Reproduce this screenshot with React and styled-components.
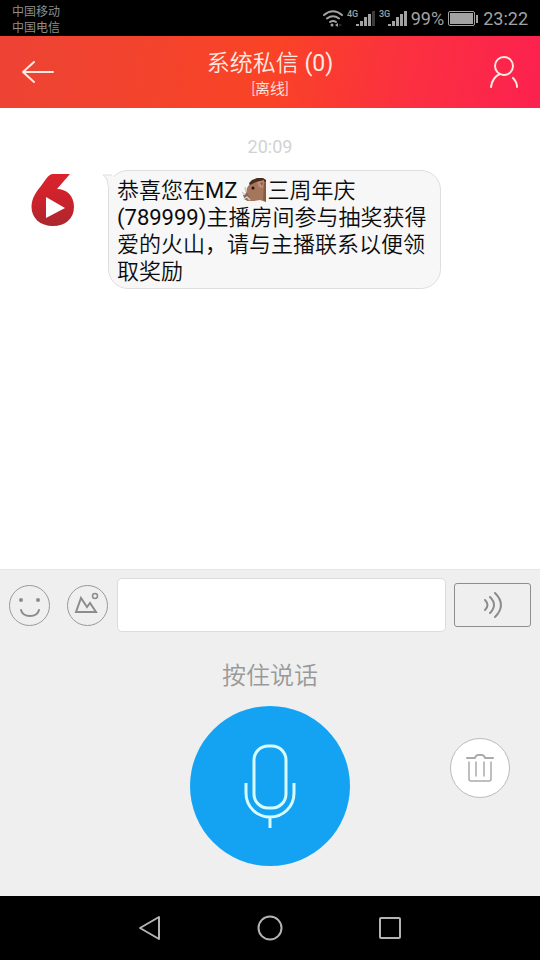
import React, { useState } from 'react';
import styled, { createGlobalStyle } from 'styled-components';

const GlobalStyle = createGlobalStyle`
  * {
    box-sizing: border-box;
  }

  body {
    margin: 0;
    background: #fff;
    font-family: Roboto, "Noto Sans CJK SC", sans-serif;
  }

  button {
    padding: 0;
    border: 0;
    background: none;
    font: inherit;
    cursor: pointer;
  }

  svg {
    display: block;
  }
`;

const Screen = styled.div`
  display: flex;
  flex-direction: column;
  min-height: 100vh;
`;

const StatusBar = styled.div`
  display: flex;
  align-items: center;
  justify-content: space-between;
  height: 36px;
  padding: 0 12px;
  background: #000;
  color: #a2a2a2;
`;

const Carriers = styled.div`
  padding-top: 4px;
  color: #8e8e8e;
  font-size: 12px;
  line-height: 16px;
`;

const Indicators = styled.div`
  display: flex;
  align-items: center;
  gap: 4px;
  padding-top: 2px;
  font-size: 18px;
  line-height: 24px;
`;

const Header = styled.header`
  display: grid;
  grid-template-columns: 1fr auto 1fr;
  align-items: center;
  height: 72px;
  padding: 0 20px;
  background: linear-gradient(100deg, #ee4334 5%, #f94326 50%, #fb3040 75%, #fc224e 98%);
  color: #ffe9e0;
`;

const HeaderButton = styled.button`
  justify-self: ${({ $end }) => ($end ? 'end' : 'start')};
  color: inherit;
`;

const Heading = styled.div`
  padding-top: 4px;
  text-align: center;
`;

const Title = styled.h1`
  margin: 0;
  font-size: 23px;
  font-weight: 350;
  line-height: 30px;
`;

const Latin = styled.span`
  font-weight: 400;
`;

const Presence = styled.div`
  font-size: 15px;
  font-weight: 350;
  line-height: 20px;
`;

const Chat = styled.main`
  flex: 1;
  padding: 26px 0;
`;

const Time = styled.div`
  color: #d2d2d2;
  font-size: 18px;
  line-height: 26px;
  text-align: center;
`;

const Message = styled.div`
  display: flex;
  align-items: flex-start;
  padding: 10px 99px 0 29px;
`;

const Avatar = styled.svg`
  flex: none;
  margin: 2px 29px 0 0;
`;

const Bubble = styled.div`
  position: relative;
  flex: 1;
  padding: 6px 8px 3px;
  border: 1px solid #dedede;
  border-radius: 20px;
  background: #f7f7f7;
  color: #0c0c0c;
  font-size: 22px;
  font-weight: 350;
  line-height: 27px;
`;

const Tail = styled.svg`
  position: absolute;
  top: 3px;
  left: -7px;
`;

const Emoji = styled.svg`
  display: inline-block;
  margin: 0 1px 0 5px;
  vertical-align: -4px;
`;

const Panel = styled.footer`
  padding: 8px 9px 30px;
  border-top: 1px solid #e6e6e6;
  background: #efefef;
`;

const Toolbar = styled.div`
  display: flex;
  align-items: center;
`;

const RoundButton = styled.button`
  display: grid;
  place-items: center;
  flex: none;
  width: ${({ $size }) => $size}px;
  height: ${({ $size }) => $size}px;
  border: 1px solid ${({ $border }) => $border || '#999'};
  border-radius: 50%;
  background: ${({ $fill }) => $fill || 'none'};
  color: #8c8c8c;
`;

const Tools = styled.div`
  display: flex;
  gap: 17px;
`;

const TextBox = styled.input`
  flex: 1;
  min-width: 0;
  height: 54px;
  margin: 0 8px 0 9px;
  padding: 0 10px;
  border: 1px solid #dcdcdc;
  border-radius: 5px;
  background: #fff;
  font: inherit;
  font-size: 22px;
`;

const VoiceButton = styled.button`
  display: grid;
  place-items: center;
  flex: none;
  width: 77px;
  height: 44px;
  border: 1px solid #8e8e8e;
  border-radius: 3px;
  color: #8c8c8c;
`;

const Hint = styled.div`
  margin: 26px 0 12px;
  color: #999;
  font-size: 24px;
  font-weight: 350;
  line-height: 36px;
  text-align: center;
`;

const Recorder = styled.div`
  display: grid;
  grid-template-columns: 1fr auto 1fr;
`;

const RecordButton = styled.button`
  display: grid;
  grid-column: 2;
  place-items: center;
  width: 160px;
  height: 160px;
  border-radius: 50%;
  background: #14a3f3;
  color: #d8fbff;
`;

const Discard = styled.div`
  justify-self: end;
  padding: 32px 21px 0 0;
`;

const NavBar = styled.nav`
  display: flex;
  align-items: center;
  justify-content: center;
  gap: 92px;
  height: 64px;
  background: #000;
`;

const NavButton = styled.button`
  color: #b4b4b4;
`;

const Icon = ({ w, h, stroke = 2, children }) => (
  <svg
    width={ w }
    height={ h }
    viewBox={ `0 0 ${w} ${h}` }
    fill="none"
    stroke="currentColor"
    strokeWidth={ stroke }
    strokeLinecap="round"
    strokeLinejoin="round"
    aria-hidden="true"
  >
    { children }
  </svg>
);

const Wifi = () => (
  <Icon w={ 20 } h={ 18 }>
    <path d="M1 5 Q10 -2.500 19 5 M4 8.500 Q10 4 16 8.500 M7 12 Q10 10 13 12" />
    <circle cx="9" cy="15" r="1.500" fill="currentColor" stroke="none" />
    <path d="M12 15 L15 13 V17 Z" fill="currentColor" stroke="none" />
    <path d="M16.500 15 H18" stroke="#555" strokeWidth="1" />
  </Icon>
);

const SIGNAL_BARS = [2, 5, 9, 12, 15];

const Signal = ({ network, level }) => (
  <svg width="28" height="18" viewBox="0 0 28 18" fill="currentColor" aria-hidden="true">
    <text x="0" y="7" fontSize="9" fontWeight="500" fontFamily="Roboto, sans-serif">{ network }</text>
    {
      SIGNAL_BARS.map((height, i) => (
        <rect
          key={ height }
          x={ 9 + i * 4 }
          y={ 16 - height }
          width={ 3 }
          height={ height }
          fill={ i < level ? 'currentColor' : '#3a3a3a' }
        />
      ))
    }
  </svg>
);

const Battery = () => (
  <svg width="31" height="16" viewBox="0 0 31 16" fill="none" stroke="currentColor" aria-hidden="true">
    <rect x="0.500" y="0.500" width="26" height="14" rx="1.500" />
    <rect x="2" y="2" width="23" height="11" fill="currentColor" stroke="none" />
    <path d="M29 4 V12" strokeWidth="2" />
  </svg>
);

const Logo = () => (
  <Avatar width="50" height="56" viewBox="0 0 50 56" role="img" aria-label="6">
    <defs>
      <linearGradient id="logo" x1="0" y1="0" x2="0" y2="1">
        <stop offset="0" stopColor="#dc222c" />
        <stop offset="0.6" stopColor="#c8232c" />
        <stop offset="1" stopColor="#a8282d" />
      </linearGradient>
    </defs>
    <path
      d="M24 2 H41 L28 17 C37 17 45 23 45 35 C45 47 36 54 24 54 C11 54 2.500 46 2.500 35 C2.500 26 7 20 12 14 C16 9 19 2 24 2 Z"
      fill="url(#logo)"
    />
    <path d="M17 25 L36 36 L17 46 Z" fill="#fff" />
  </Avatar>
);

const Boar = () => (
  <Emoji width="24" height="24" viewBox="0 0 24 24" role="img" aria-label="boar">
    <path d="M5 10 L9 4 L14 1 H21 L24 2 V24 L18 22 L12 23 L5 23 L2 20 L4 15 Z" fill="#a5755c" />
    <path d="M7 5 L10 2 L15 0 H21 L24 2 V4 L20 3 L14 4 L8 7 Z" fill="#4b2d1b" />
    <path d="M15 4 L22 2 L21 10 L17 9 Z" fill="#c18e78" />
    <path d="M18 5 L21 4 L20 8 Z" fill="#8c5a49" />
    <path d="M22 5 L24 4 V24 L21 22 Z" fill="#8b5a3c" />
    <circle cx="11" cy="10" r="1.500" fill="#20120c" />
    <path d="M1 17 L5 15 L8 20 L3 22 Z" fill="#80665d" />
    <path d="M0 14 L3 17 M3 9 L4 14 M2 21 L5 19 L8 22" fill="none" stroke="#d2ccc8" strokeWidth="1.500" />
  </Emoji>
);

const App = () => {
  const [text, setText] = useState('');

  return (
    <Screen>
      <GlobalStyle />
      <StatusBar>
        <Carriers>
          <div>中国移动</div>
          <div>中国电信</div>
        </Carriers>
        <Indicators>
          <Wifi />
          <Signal network="4G" level={ 4 } />
          <Signal network="3G" level={ 5 } />
          <span>99%</span>
          <Battery />
          <span>23:22</span>
        </Indicators>
      </StatusBar>

      <Header>
        <HeaderButton aria-label="返回">
          <Icon w={ 36 } h={ 24 }>
            <path d="M33 12 H3 M14 2 L3 12 L14 22" />
          </Icon>
        </HeaderButton>
        <Heading>
          <Title>系统私信 <Latin>(0)</Latin></Title>
          <Presence>[离线]</Presence>
        </Heading>
        <HeaderButton $end aria-label="个人资料">
          <Icon w={ 32 } h={ 34 } stroke={ 2 }>
            <circle cx="16" cy="11" r="9" />
            <path d="M3 32 C4 25 7 21 12 19 M25 23 C27 25 29 28 29 32" />
          </Icon>
        </HeaderButton>
      </Header>

      <Chat>
        <Time>20:09</Time>
        <Message>
          <Logo />
          <Bubble>
            <Tail width="12" height="12" viewBox="0 0 12 12" aria-hidden="true">
              <path d="M12 1 H1 Q6 4 6 12 H12 Z" fill="#f7f7f7" />
              <path d="M10 1 H1 Q6 4 6 12" fill="none" stroke="#dedede" />
            </Tail>
            恭喜您在<Latin>MZ</Latin><Boar />三周年庆<Latin>(789999)</Latin>主播房间参与抽奖获得爱的火山，请与主播联系以便领取奖励
          </Bubble>
        </Message>
      </Chat>

      <Panel>
        <Toolbar>
          <Tools>
            <RoundButton $size={ 41 } aria-label="表情">
              <Icon w={ 39 } h={ 39 }>
                <circle cx="11" cy="14" r="2" fill="currentColor" stroke="none" />
                <circle cx="28" cy="14" r="2" fill="currentColor" stroke="none" />
                <path d="M11 24 C13 32 27 32 29 24" />
              </Icon>
            </RoundButton>
            <RoundButton $size={ 41 } aria-label="图片">
              <Icon w={ 39 } h={ 39 }>
                <path d="M8 26 L13 12 L19 21 L22 17 L28 26 Z" strokeLinejoin="miter" />
                <circle cx="27" cy="10" r="2.500" strokeWidth="1.500" />
              </Icon>
            </RoundButton>
          </Tools>
          <TextBox aria-label="消息" value={ text } onChange={ (e) => setText(e.target.value) } />
          <VoiceButton aria-label="语音">
            <Icon w={ 20 } h={ 28 }>
              <path d="M2 9 Q7 14 2 19 M7 6 Q15 14 7 22 M12 2 Q24 14 12 26" />
            </Icon>
          </VoiceButton>
        </Toolbar>
        <Hint>按住说话</Hint>
        <Recorder>
          <RecordButton aria-label="按住说话">
            <Icon w={ 52 } h={ 86 } stroke={ 3 }>
              <rect x="10" y="3" width="32" height="62" rx="14" />
              <path d="M2 40 V50 C2 64 13 74 26 74 C39 74 50 64 50 50 V40 M26 74 V85" strokeLinecap="butt" />
            </Icon>
          </RecordButton>
          <Discard>
            <RoundButton $size={ 60 } $border="#bbb" $fill="#fff" aria-label="删除">
              <Icon w={ 30 } h={ 30 }>
                <g stroke="#aaa">
                  <path d="M2 5 H10 Q11 2 13 2 H17 Q19 2 20 5 H28" />
                  <path d="M4 9 V26 Q4 28 6 28 H24 Q26 28 26 26 V9 M11 9 V23 M19 9 V23" strokeWidth="1.500" />
                </g>
              </Icon>
            </RoundButton>
          </Discard>
        </Recorder>
      </Panel>

      <NavBar>
        <NavButton aria-label="返回">
          <Icon w={ 28 } h={ 28 }>
            <path d="M23 3 V25 L4 14 Z" />
          </Icon>
        </NavButton>
        <NavButton aria-label="主屏幕">
          <Icon w={ 28 } h={ 28 }>
            <circle cx="14" cy="14" r="11.500" />
          </Icon>
        </NavButton>
        <NavButton aria-label="最近任务">
          <Icon w={ 28 } h={ 28 }>
            <rect x="4" y="4" width="20" height="20" rx="1" />
          </Icon>
        </NavButton>
      </NavBar>
    </Screen>
  );
};

export default App;
